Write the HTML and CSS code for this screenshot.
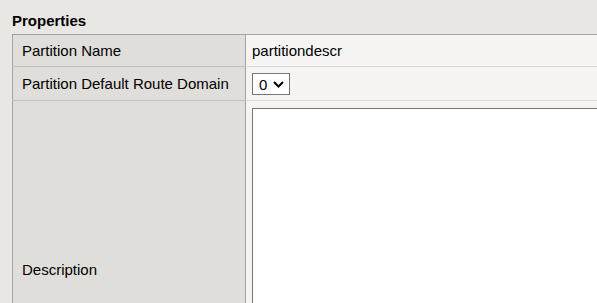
FILE: index.html
```html
<!DOCTYPE html>
<html lang="en">
<head>
  <meta charset="UTF-8" />
  <title>Partition Properties</title>
  <link rel="stylesheet" href="styles.css">
</head>
<body>

  <div class="properties">
    <h3 class="section-title">Properties</h3>

    <table class="prop-table">
      <tr>
        <td class="label">Partition Name</td>
        <td class="value">partitiondescr</td>
      </tr>
      <tr>
        <td class="label">Partition Default Route Domain</td>
        <td class="value select-cell">
          <span class="select-wrap">
            <select id="route-domain">
              <option>0</option>
            </select>
            <svg class="chevron" width="11" height="7" viewBox="0 0 11 7">
              <path d="M1 1 L5.5 5.5 L10 1" fill="none" stroke="#000" stroke-width="2"/>
            </svg>
          </span>
        </td>
      </tr>
      <tr>
        <td class="label">Description</td>
        <td class="value">
          <textarea id="description"></textarea>
        </td>
      </tr>
    </table>
  </div>

</body>
</html>
```

FILE: styles.css
```css
html, body {
  overflow: hidden;
}

body {
  font-family: "Liberation Sans", Arial, sans-serif;
  font-size: 15px;
  line-height: 17px;
  color: #000;
  background-color: #e8e7e3;
  margin: 0;
  padding: 12px 0 0 12px;
}

.section-title {
  font-size: 15px;
  font-weight: bold;
  line-height: 17px;
  margin: 0 0 5px 0;
}

.prop-table {
  border-collapse: collapse;
  border-top: 1px solid #a3a3a1;
  border-left: 1px solid #a3a3a1;
}

.prop-table td {
  vertical-align: middle;
  border-bottom: 1px solid #d9d8d5;
}

.label {
  width: 223px;
  min-width: 223px;
  white-space: nowrap;
  background-color: #dfdeda;
  padding: 7px 0 7px 9px;
  border-right: 1px solid #a3a3a1;
  border-bottom-color: #c2c1be !important;
}

.value {
  width: 500px;
  white-space: nowrap;
  background-color: #f5f4f2;
  padding: 7px 0 7px 6px;
}

.select-cell {
  padding-top: 6px;
  padding-bottom: 5px;
}

.select-wrap {
  position: relative;
  display: inline-block;
  vertical-align: middle;
}

#route-domain {
  appearance: none;
  -webkit-appearance: none;
  display: block;
  width: 38px;
  height: 22px;
  margin: 0;
  padding: 0 0 0 6px;
  font-family: "Liberation Sans", Arial, sans-serif;
  font-size: 15px;
  color: #000;
  background-color: #fff;
  border: 1px solid #767676;
  border-radius: 0;
}

.chevron {
  position: absolute;
  left: 21px;
  top: 8px;
  pointer-events: none;
}

#description {
  display: block;
  width: 480px;
  height: 322px;
  margin: 0;
  padding: 2px;
  box-sizing: border-box;
  background-color: #fff;
  border: 1px solid #767676;
  border-radius: 0;
  resize: none;
}
```
